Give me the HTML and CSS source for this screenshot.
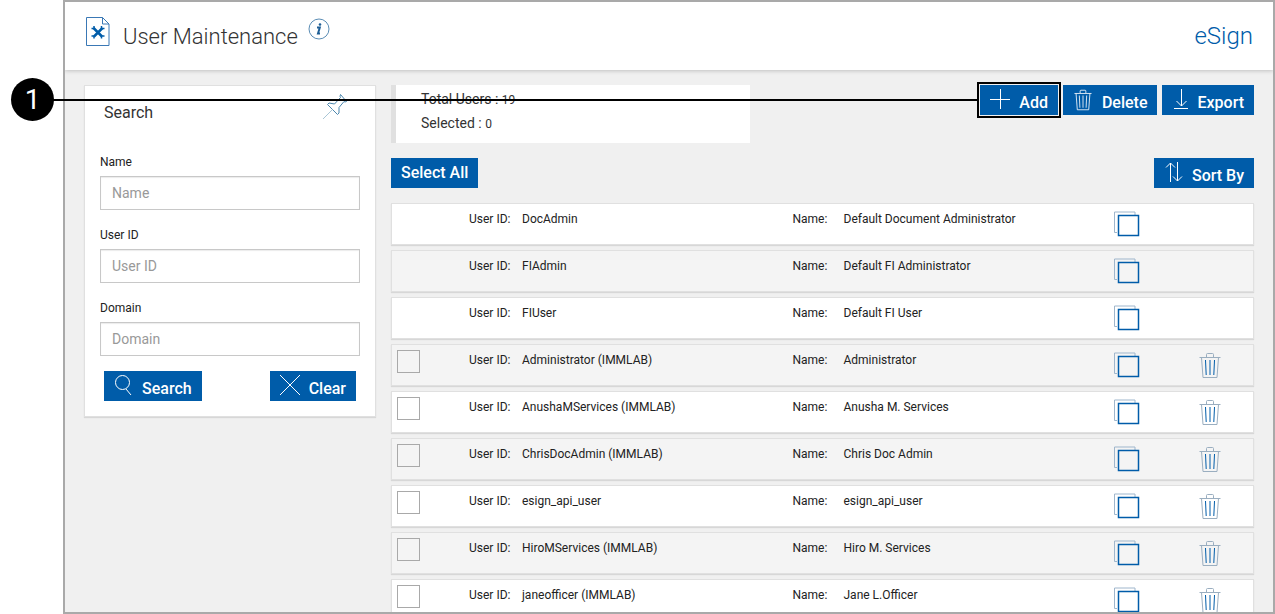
FILE: index.html
```
<!DOCTYPE html>
<html lang="en">
<head>
    <meta charset="UTF-8">
    <meta name="viewport" content="width=device-width, initial-scale=1.0">
    <title>User Maintenance</title>
    <link rel="stylesheet" href="styles.css">
</head>
<body>
    <!-- Shared icons -->
    <svg class="icon-defs" aria-hidden="true">
        <symbol id="icon-trash" viewBox="0 0 22 27">
            <path d="M.5 5.500h21M7.500 5V2.500q0-1 1-1h5q1 0 1 1V5M2.500 5.500l1.500 20h14l1.500-20"/>
            <path class="bars" d="M6.500 8l.7 15M11 8v15M15.500 8l-.7 15"/>
        </symbol>
        <symbol id="icon-copy" viewBox="0 0 26 26">
            <path class="back" d="M3 21.500H.500V1H21v3"/>
            <rect class="front" x="4.500" y="4.500" width="20" height="20"/>
        </symbol>
    </svg>

    <div class="frame">
        <header class="header">
            <svg class="page-icon" width="24" height="30" viewBox="0 0 24 30">
                <path d="M.5.500h16l6.500 6.500v21.500H.5zM16.500.500V7H23" fill="none" stroke="#3a78b5"/>
                <path d="M7.500 11l8.500 8.500M16.500 11L8 19.500" stroke="#005ca9" stroke-width="2.500"/>
                <path d="M5.500 11.500h2.500V9M15.500 9v2.500H18.500M15.500 21.500v-2.500H18.500M5.500 19h2.500v2.500" fill="none" stroke="#005ca9" stroke-width="1.500"/>
            </svg>
            <h1>User Maintenance</h1>
            <svg class="info-icon" width="22" height="22" viewBox="0 0 22 22">
                <circle cx="11" cy="11" r="10" fill="none" stroke="#5b8db5"/>
                <path d="M9 9.500h2.800L10 15.500h2" fill="none" stroke="#1f5f96" stroke-width="2"/>
                <circle cx="12" cy="6.500" r="1.300" fill="#1f5f96"/>
            </svg>
            <span class="brand">eSign</span>
        </header>

        <div class="content">
            <aside class="search-panel">
                <div class="panel-head">
                    <h2>Search</h2>
                    <svg width="26" height="26" viewBox="0 0 26 26" fill="none" stroke="#4b86ad">
                        <path d="M18.500.500l6 7-1.500.500-1-.500-5 6v5.500l-1.500 1.500L5.500 10.500 7 9l5.500 1 6-6.500-.5-1z"/>
                        <path d="M10.500 15.500L1 25" stroke="#a9c6d6"/>
                    </svg>
                </div>
                <form>
                    <label for="name">Name</label>
                    <input type="text" id="name" name="name" placeholder="Name">

                    <label for="userid">User ID</label>
                    <input type="text" id="userid" name="userid" placeholder="User ID">

                    <label for="domain">Domain</label>
                    <input type="text" id="domain" name="domain" placeholder="Domain">

                    <div class="form-buttons">
                        <button type="button" class="btn">
                            <svg width="19" height="20" viewBox="0 0 19 20"><circle cx="8.500" cy="7.500" r="7"/><path d="M12 14l5 6"/></svg>
                            <span>Search</span>
                        </button>
                        <button type="button" class="btn">
                            <svg width="20" height="20" viewBox="0 0 20 20"><path d="M0 0l20 20M20 0L0 20"/></svg>
                            <span>Clear</span>
                        </button>
                    </div>
                </form>
            </aside>

            <main class="users">
                <div class="toolbar">
                    <div class="totals">
                        <div>Total Users : <span>19</span></div>
                        <div>Selected : <span>0</span></div>
                    </div>
                    <div class="actions">
                        <button type="button" class="btn marked">
                            <svg width="20" height="20" viewBox="0 0 20 20"><path d="M10.500 0v20M0 10.500h20"/></svg>
                            <span>Add</span>
                        </button>
                        <button type="button" class="btn">
                            <svg width="20" height="22"><use href="#icon-trash"/></svg>
                            <span>Delete</span>
                        </button>
                        <button type="button" class="btn">
                            <svg width="16" height="20" viewBox="0 0 16 20"><path d="M9.500 0v17M4.500 12l5 5 5-5M2 19.500h14"/></svg>
                            <span>Export</span>
                        </button>
                    </div>
                </div>

                <div class="list-head">
                    <button type="button" class="btn plain">Select All</button>
                    <button type="button" class="btn">
                        <svg width="19" height="20" viewBox="0 0 19 20"><path d="M6.500 20V1M2 5.500L6.500 1 11 5.500M13.500 0v19M9 14.500l4.500 4.500 4.500-4.500"/></svg>
                        <span>Sort By</span>
                    </button>
                </div>

                <ul class="user-list">
                    <li>
                        <span></span>
                        <span>User ID:</span><span>DocAdmin</span>
                        <span>Name:</span><span>Default Document Administrator</span>
                        <svg class="copy"><use href="#icon-copy"/></svg>
                    </li>
                    <li>
                        <span></span>
                        <span>User ID:</span><span>FIAdmin</span>
                        <span>Name:</span><span>Default FI Administrator</span>
                        <svg class="copy"><use href="#icon-copy"/></svg>
                    </li>
                    <li>
                        <span></span>
                        <span>User ID:</span><span>FIUser</span>
                        <span>Name:</span><span>Default FI User</span>
                        <svg class="copy"><use href="#icon-copy"/></svg>
                    </li>
                    <li>
                        <input type="checkbox" aria-label="Select Administrator">
                        <span>User ID:</span><span>Administrator (IMMLAB)</span>
                        <span>Name:</span><span>Administrator</span>
                        <svg class="copy"><use href="#icon-copy"/></svg>
                        <svg class="trash"><use href="#icon-trash"/></svg>
                    </li>
                    <li>
                        <input type="checkbox" aria-label="Select Anusha M. Services">
                        <span>User ID:</span><span>AnushaMServices (IMMLAB)</span>
                        <span>Name:</span><span>Anusha M. Services</span>
                        <svg class="copy"><use href="#icon-copy"/></svg>
                        <svg class="trash"><use href="#icon-trash"/></svg>
                    </li>
                    <li>
                        <input type="checkbox" aria-label="Select Chris Doc Admin">
                        <span>User ID:</span><span>ChrisDocAdmin (IMMLAB)</span>
                        <span>Name:</span><span>Chris Doc Admin</span>
                        <svg class="copy"><use href="#icon-copy"/></svg>
                        <svg class="trash"><use href="#icon-trash"/></svg>
                    </li>
                    <li>
                        <input type="checkbox" aria-label="Select esign_api_user">
                        <span>User ID:</span><span>esign_api_user</span>
                        <span>Name:</span><span>esign_api_user</span>
                        <svg class="copy"><use href="#icon-copy"/></svg>
                        <svg class="trash"><use href="#icon-trash"/></svg>
                    </li>
                    <li>
                        <input type="checkbox" aria-label="Select Hiro M. Services">
                        <span>User ID:</span><span>HiroMServices (IMMLAB)</span>
                        <span>Name:</span><span>Hiro M. Services</span>
                        <svg class="copy"><use href="#icon-copy"/></svg>
                        <svg class="trash"><use href="#icon-trash"/></svg>
                    </li>
                    <li>
                        <input type="checkbox" aria-label="Select Jane L.Officer">
                        <span>User ID:</span><span>janeofficer (IMMLAB)</span>
                        <span>Name:</span><span>Jane L.Officer</span>
                        <svg class="copy"><use href="#icon-copy"/></svg>
                        <svg class="trash"><use href="#icon-trash"/></svg>
                    </li>
                </ul>
            </main>
        </div>
    </div>

    <!-- Step callout pointing at the Add button -->
    <div class="callout-line"></div>
    <div class="callout">1</div>
</body>
</html>
```
FILE: styles.css
```
* {
    box-sizing: border-box;
}

body {
    font-family: Roboto, "Liberation Sans", sans-serif;
    font-size: 12px;
    color: #222;
    margin: 0;
    padding-left: 63px;
    position: relative;
    background-color: #fff;
}

.icon-defs {
    position: absolute;
    width: 0;
    height: 0;
}

.frame {
    height: 100vh;
    border: 2px solid #a9a9a9;
    background-color: #f0f0f0;
    overflow: hidden;
}

/* Header */
.header {
    display: flex;
    align-items: center;
    height: 68px;
    padding: 0 20px;
    background-color: #fff;
    box-shadow: 0 1px 4px rgba(0, 0, 0, 0.2);
}

.page-icon {
    margin: 0 13px 8px 1px;
}

h1 {
    margin: 0;
    font-size: 22px;
    font-weight: 300;
    color: #333;
}

.info-icon {
    margin: 0 0 14px 10px;
}

.brand {
    margin-left: auto;
    font-size: 24px;
    font-weight: 300;
    color: #005ca9;
}

.content {
    display: flex;
    align-items: flex-start;
    gap: 15px;
    padding: 15px 19px;
}

/* Search panel */
.search-panel {
    width: 292px;
    flex-shrink: 0;
    padding: 8px 15px 15px;
    background-color: #fff;
    border: 1px solid #e0e0e0;
    box-shadow: 0 1px 1px rgba(0, 0, 0, 0.1);
}

.panel-head {
    display: flex;
    justify-content: space-between;
    padding: 0 12px 0 4px;
    margin-bottom: 31px;
}

h2 {
    margin: 9px 0 0;
    font-size: 16px;
    line-height: 20px;
    font-weight: 400;
    color: #333;
}

label {
    display: block;
    line-height: 16px;
    margin: 17px 0 6px;
}

input[type="text"] {
    display: block;
    width: 100%;
    height: 34px;
    padding: 0 11px;
    border: 1px solid #c8c8c8;
    box-shadow: inset 0 1px 1px rgba(0, 0, 0, 0.08);
    font-family: inherit;
    font-size: 14px;
}

input::placeholder {
    color: #999;
}

.form-buttons {
    display: flex;
    justify-content: space-between;
    padding: 0 4px;
    margin-top: 15px;
}

/* Buttons */
.btn {
    display: flex;
    align-items: flex-start;
    gap: 9px;
    height: 30px;
    padding: 4px 10px 0;
    border: none;
    background-color: #005ca9;
    color: #fff;
    font-family: inherit;
    font-size: 16px;
    font-weight: 500;
    line-height: 20px;
    white-space: nowrap;
    cursor: pointer;
}

.btn span {
    margin-top: 4px;
}

.btn.plain {
    align-items: center;
    padding: 0 10px;
}

.btn.marked {
    outline: 2px solid #000;
    outline-offset: 1px;
}

svg {
    flex-shrink: 0;
}

.btn svg {
    fill: none;
    stroke: #fff;
}

/* Totals and actions */
.users {
    flex: 1;
}

.toolbar {
    display: flex;
    justify-content: space-between;
    align-items: flex-start;
    margin-bottom: 15px;
}

.totals {
    width: 359px;
    padding: 2px 25px 8px;
    background-color: #fff;
    border-left: 5px solid #e0e0e0;
    font-size: 14px;
    line-height: 24px;
    color: #333;
}

.totals span {
    font-size: 12px;
    line-height: 12px;
}

.actions {
    display: flex;
    gap: 5px;
}

.list-head {
    display: flex;
    justify-content: space-between;
    margin-bottom: 15px;
}

/* User rows */
.user-list {
    list-style: none;
    margin: 0;
    padding: 0;
}

.user-list li {
    display: grid;
    grid-template-columns: 72px 53px 1fr 51px 1fr 85px 54px;
    align-items: start;
    height: 42px;
    margin-bottom: 5px;
    padding: 5px 0 0 5px;
    background-color: #fff;
    border: 1px solid #e0e0e0;
    box-shadow: 0 1px 1px rgba(0, 0, 0, 0.1);
    line-height: 20px;
}

.user-list li:nth-child(even) {
    background-color: #f4f4f4;
}

input[type="checkbox"] {
    appearance: none;
    width: 23px;
    height: 23px;
    margin: 0;
    border: 1px solid #a9a9a9;
}

.copy {
    width: 26px;
    height: 26px;
    margin-top: 2px;
    fill: none;
}

.back {
    stroke: #9fb6cc;
}

.front {
    stroke: #005ca9;
    stroke-width: 1.5;
}

.trash {
    --bars: #005ca9;
    width: 22px;
    height: 27px;
    margin-top: 2px;
    fill: none;
    stroke: #9aaec0;
}

/* White inside buttons, blue in the list */
.bars {
    stroke: var(--bars, #fff);
}

/* Step callout */
.callout {
    position: absolute;
    top: 78px;
    left: 11px;
    width: 43px;
    height: 43px;
    border-radius: 50%;
    background-color: #000;
    color: #fff;
    font-size: 28px;
    line-height: 43px;
    text-align: center;
}

.callout-line {
    position: absolute;
    top: 99px;
    left: 50px;
    right: 298px;
    height: 2px;
    background-color: #000;
}
```
